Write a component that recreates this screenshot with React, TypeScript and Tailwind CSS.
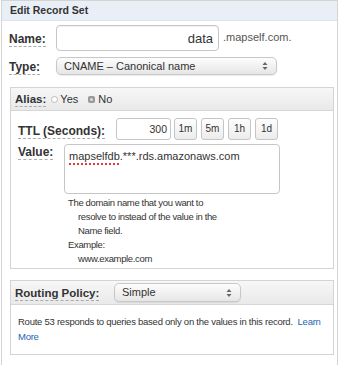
import React from 'react';

function Label({ children, size = 'text-[12px]' }: { children: React.ReactNode; size?: string }) {
  return (
    <span
      className={`inline-block align-middle font-bold ${size} text-[#333] border-b border-dashed border-[#aaa] leading-[14px]`}
    >
      {children}
    </span>
  );
}

function Arrows() {
  return (
    <svg width="6" height="10" viewBox="0 0 6 10" className="text-[#666]">
      <path d="M3 1 L5.5 4 H0.5 Z" fill="currentColor" />
      <path d="M3 9 L5.5 6 H0.5 Z" fill="currentColor" />
    </svg>
  );
}

function Select({ value, className }: { value: string; className: string }) {
  return (
    <div
      className={`flex items-center justify-between rounded-[5px] border border-[#c8c8c8] bg-gradient-to-b from-[#fdfdfd] to-[#e6e6e6] shadow-[0_1px_1px_rgba(0,0,0,0.08)] pl-[7px] pr-[8px] text-[#333] leading-none ${className}`}
    >
      <span>{value}</span>
      <Arrows />
    </div>
  );
}

function TtlButton({ children }: { children: React.ReactNode }) {
  return (
    <button className="h-[22px] w-[23px] rounded-[3px] border border-[#c5c5c5] bg-gradient-to-b from-[#fefefe] to-[#ececec] text-[10px] text-[#333] leading-none">
      {children}
    </button>
  );
}

export default function App() {
  return (
    <div
      className="w-[341px] h-[365px] bg-white leading-none"
      style={{ fontFamily: '"Liberation Sans", Arial, sans-serif' }}
    >
      <div className="ml-[1px] w-[337px] h-[365px] border-x border-t border-[#d4d4d4] bg-white">
        {/* Header */}
        <div className="h-[20px] bg-[#e9eff6] border-b border-[#dde4ec] pl-[8px] flex items-center text-[10.5px] font-bold text-[#333]">
          Edit Record Set
        </div>

        {/* Name */}
        <div className="flex items-center pl-[7px] mt-[4px] h-[26px]">
          <div className="w-[47px] pt-[1px]">
            <Label>Name:</Label>
          </div>
          <div className="w-[163px] h-[26px] rounded-[4px] border border-[#c6c6c6] shadow-[inset_0_1px_1px_rgba(0,0,0,0.06)] flex items-center justify-end pr-[5px] text-[13px] text-[#333]">
            data
          </div>
          <span className="ml-[4px] pb-[2px] text-[11px] text-[#555]">.mapself.com.</span>
        </div>

        {/* Type */}
        <div className="flex items-center pl-[7px] mt-[6px] h-[18px]">
          <div className="w-[47px] pt-[2px]">
            <Label>Type:</Label>
          </div>
          <Select value="CNAME – Canonical name" className="w-[221px] h-[18px] text-[11px]" />
        </div>

        {/* Alias box */}
        <div className="ml-[8px] mt-[12px] w-[324px] border border-[#d4d4d4]">
          <div className="h-[23px] bg-gradient-to-b from-[#f7f7f7] to-[#e9e9e9] border-b border-[#d6d6d6] flex items-center pl-[4px] text-[11px] text-[#333]">
            <Label size="text-[11.5px]">Alias:</Label>
            <span className="ml-[5px] inline-block w-[7px] h-[7px] rounded-full border border-[#bbb] bg-white" />
            <span className="ml-[2px]">Yes</span>
            <span className="ml-[10px] inline-block w-[7px] h-[7px] rounded-[2px] bg-[#999] relative">
              <span className="absolute left-[2px] top-[2px] w-[3px] h-[3px] rounded-full bg-[#ddd]" />
            </span>
            <span className="ml-[3px]">No</span>
          </div>

          <div className="pl-[7px] pt-[7px] pb-[2px]">
            {/* TTL */}
            <div className="flex items-center h-[22px]">
              <div className="w-[98px] pt-[3px]">
                <Label>TTL (Seconds):</Label>
              </div>
              <div className="w-[55px] h-[22px] rounded-[3px] border border-[#c6c6c6] flex items-center justify-end pr-[3px] text-[10.5px] text-[#333]">
                300
              </div>
              <div className="flex gap-[4px] ml-[3px]">
                <TtlButton>1m</TtlButton>
                <TtlButton>5m</TtlButton>
                <TtlButton>1h</TtlButton>
                <TtlButton>1d</TtlButton>
              </div>
            </div>

            {/* Value */}
            <div className="flex items-start mt-[4px]">
              <div className="w-[46px]">
                <Label>Value:</Label>
              </div>
              <div>
                <div className="w-[216px] h-[50px] rounded-[4px] border border-[#c6c6c6] px-[4px] pt-[4px] text-[11px] text-[#333] leading-[14px]">
                  <span className="underline decoration-dotted decoration-[#e33] decoration-[1.5px] underline-offset-[3px]">mapselfdb</span>
                  .***.rds.amazonaws.com
                </div>
                <div className="pl-[4px] pt-[2px] text-[9.5px] tracking-[-0.35px] text-[#333] leading-[14px]">
                  <div>The domain name that you want to</div>
                  <div className="pl-[10px]">resolve to instead of the value in the</div>
                  <div className="pl-[10px]">Name field.</div>
                  <div>Example:</div>
                  <div className="pl-[10px]">www.example.com</div>
                </div>
              </div>
            </div>
          </div>
        </div>

        {/* Routing box */}
        <div className="ml-[8px] mt-[11px] w-[324px] border border-[#d4d4d4]">
          <div className="h-[24px] bg-gradient-to-b from-[#f7f7f7] to-[#e9e9e9] border-b border-[#d6d6d6] flex items-center pl-[4px]">
            <div className="w-[99px]">
              <Label size="text-[11.5px]">Routing Policy:</Label>
            </div>
            <Select value="Simple" className="w-[127px] h-[19px] text-[11px]" />
          </div>
          <div className="pl-[7px] pr-[4px] pt-[9px] pb-[10px] text-[9.5px] tracking-[-0.25px] text-[#333] leading-[15px] h-[49px]">
            Route 53 responds to queries based only on the values in this record.{'\u00a0 '}
            <span className="text-[#1a66b3]">Learn More</span>
          </div>
        </div>
      </div>
    </div>
  );
}
